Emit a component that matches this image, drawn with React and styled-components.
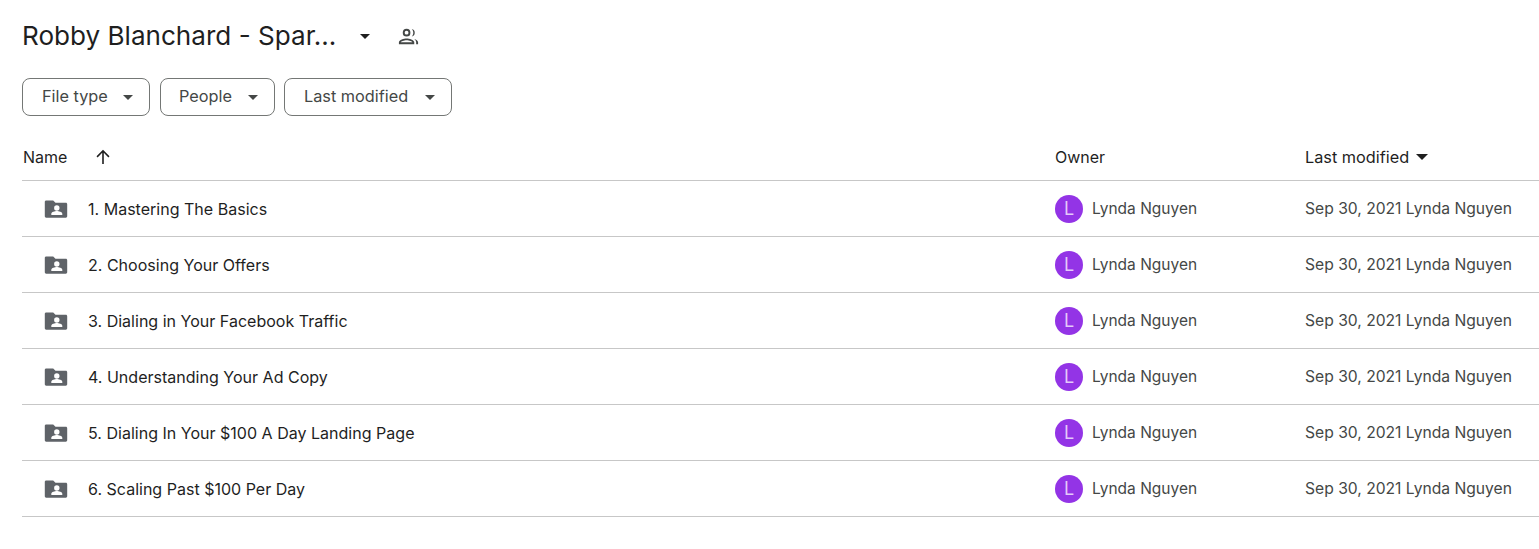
import React from "react";
import styled, { createGlobalStyle } from "styled-components";

const Global = createGlobalStyle`
  html, body { margin: 0; padding: 0; background: #fff; overflow: hidden; }
  body { font-family: Inter, Roboto, sans-serif; color: #1f1f1f; }
`;
const Page = styled.div`
  padding: 16px 0 0 22px;
`;
const TitleBar = styled.div`
  display: flex;
  align-items: center;
  height: 40px;
`;
const Title = styled.h1`
  margin: 0;
  width: 314px;
  font-size: 26.1px;
  font-weight: 400;
  line-height: 40px;
  white-space: nowrap;
  color: #1f1f1f;
`;
const TitleCaret = styled.svg`
  width: 24px;
  height: 24px;
  margin-left: 17px;
  fill: #1f1f1f;
`;
const PeopleIcon = styled.svg`
  width: 23px;
  height: 23px;
  margin-left: 20px;
  fill: #444746;
`;
const Filters = styled.div`
  display: flex;
  margin-top: 22px;
`;
const Chip = styled.button`
  display: flex;
  align-items: center;
  justify-content: space-between;
  box-sizing: border-box;
  width: ${(p) => p.$w}px;
  height: 38px;
  margin-right: ${(p) => p.$gap}px;
  padding: 0 16px 2px ${(p) => p.$pad || 19}px;
  border: 1px solid #747775;
  border-radius: 8px;
  background: #fff;
  font: 400 16.3px Inter, sans-serif;
  color: #444746;
`;
const ChipCaret = styled.svg`
  width: 10px;
  height: 5px;
  margin-top: 2px;
  fill: #444746;
`;
const Row = styled.div`
  display: grid;
  grid-template-columns: 1033px 250px 1fr;
  align-items: center;
  box-sizing: border-box;
  height: 56px;
  border-bottom: 1px solid #c7c7c7;
`;
const HeaderRow = styled(Row)`
  height: 65px;
  padding-top: 17px;
`;
const HeaderCell = styled.div`
  display: flex;
  align-items: center;
  font-size: ${(p) => p.$size || 16}px;
  color: #1f1f1f;
  padding-left: ${(p) => p.$pad || 0}px;
`;
const SortIcon = styled.svg`
  width: 16px;
  height: 16px;
  margin-left: 28px;
  fill: #1f1f1f;
`;
const SortCaret = styled.svg`
  width: 12px;
  height: 6px;
  margin-left: 7px;
  fill: #1f1f1f;
`;
const NameCell = styled.div`
  display: flex;
  align-items: center;
  padding-left: 22px;
  font-size: 16.05px;
  color: #1f1f1f;
`;
const NameText = styled.span`
  margin-left: ${(p) => p.$shift || 0}px;
`;
const FolderIcon = styled.svg`
  width: 24px;
  height: 24px;
  margin-right: 20px;
`;
const OwnerCell = styled.div`
  display: flex;
  align-items: center;
  font-size: 15.5px;
  color: #444746;
`;
const Avatar = styled.div`
  display: flex;
  align-items: center;
  justify-content: center;
  width: 28px;
  height: 28px;
  margin-right: 9px;
  border-radius: 50%;
  background: #9334e6;
  color: #e3c9fa;
  font-size: 18px;
`;
const DateCell = styled.div`
  font-size: 15.65px;
  color: #444746;
  white-space: nowrap;
`;

const Folder = () => (
  <FolderIcon viewBox="0 0 24 24">
    <path fill="#5f6368" d="M2.200 3.400h7l2.300 2.400h10.300c.9 0 1.400.7 1.400 1.400v12.100c0 .8-.6 1.400-1.400 1.400H2.200c-.8 0-1.400-.6-1.400-1.400V4.800c0-.8.6-1.400 1.400-1.400z" />
    <circle fill="#fff" cx="12.800" cy="11" r="2.700" />
    <path fill="#fff" d="M7.300 18v-1.300c0-1.900 3.600-2.800 5.500-2.800s5.500.9 5.500 2.800V18z" />
  </FolderIcon>
);

const Caret = ({ as: C }) => (
  <C viewBox="0 0 10 5">
    <path d="M0 0h10L5 5z" />
  </C>
);

const files = [
  "1. Mastering The Basics",
  "2. Choosing Your Offers",
  "3. Dialing in Your Facebook Traffic",
  "4. Understanding Your Ad Copy",
  "5. Dialing In Your $100 A Day Landing Page",
  "6. Scaling Past $100 Per Day",
];

export default function App() {
  return (
    <Page>
      <Global />
      <TitleBar>
        <Title>Robby Blanchard - Spar...</Title>
        <TitleCaret viewBox="0 0 24 24">
          <path d="M7 10l5 5 5-5z" />
        </TitleCaret>
        <PeopleIcon viewBox="0 0 24 24">
          <path d="M10 12a4 4 0 1 0 0-8 4 4 0 0 0 0 8zm0-6a2 2 0 1 1 0 4 2 2 0 0 1 0-4zM10 14c-2.700 0-8 1.300-8 4v2h16v-2c0-2.700-5.300-4-8-4zm-6 4c.2-.7 3.300-2 6-2s5.800 1.300 6 2H4zM15.400 4.100a4 4 0 0 1 0 7.800c1-1 1.600-2.400 1.600-3.900s-.6-2.900-1.600-3.900zM18 14.500c2 .6 4 1.700 4 3.500v2h-2v-2c0-1.400-.8-2.600-2-3.500z" />
        </PeopleIcon>
      </TitleBar>
      <Filters>
        <Chip $w={128} $gap={10}>File type<Caret as={ChipCaret} /></Chip>
        <Chip $w={115} $gap={9} $pad={18}>People<Caret as={ChipCaret} /></Chip>
        <Chip $w={168} $gap={0}>Last modified<Caret as={ChipCaret} /></Chip>
      </Filters>
      <HeaderRow>
        <HeaderCell $pad={1}>
          Name
          <SortIcon viewBox="0 0 16 16">
            <path d="M7.200 15V3.800L2.600 8.400 1.500 7.300 8 .8l6.500 6.500-1.100 1.100-4.600-4.600V15z" />
          </SortIcon>
        </HeaderCell>
        <HeaderCell>Owner</HeaderCell>
        <HeaderCell $size={16.3}>
          Last modified
          <SortCaret viewBox="0 0 10 5">
            <path d="M0 0h10L5 5z" />
          </SortCaret>
        </HeaderCell>
      </HeaderRow>
      {files.map((f) => (
        <Row key={f}>
          <NameCell>
            <Folder />
            <NameText>{f}</NameText>
          </NameCell>
          <OwnerCell>
            <Avatar>L</Avatar>
            Lynda Nguyen
          </OwnerCell>
          <DateCell>Sep 30, 2021 Lynda Nguyen</DateCell>
        </Row>
      ))}
    </Page>
  );
}
